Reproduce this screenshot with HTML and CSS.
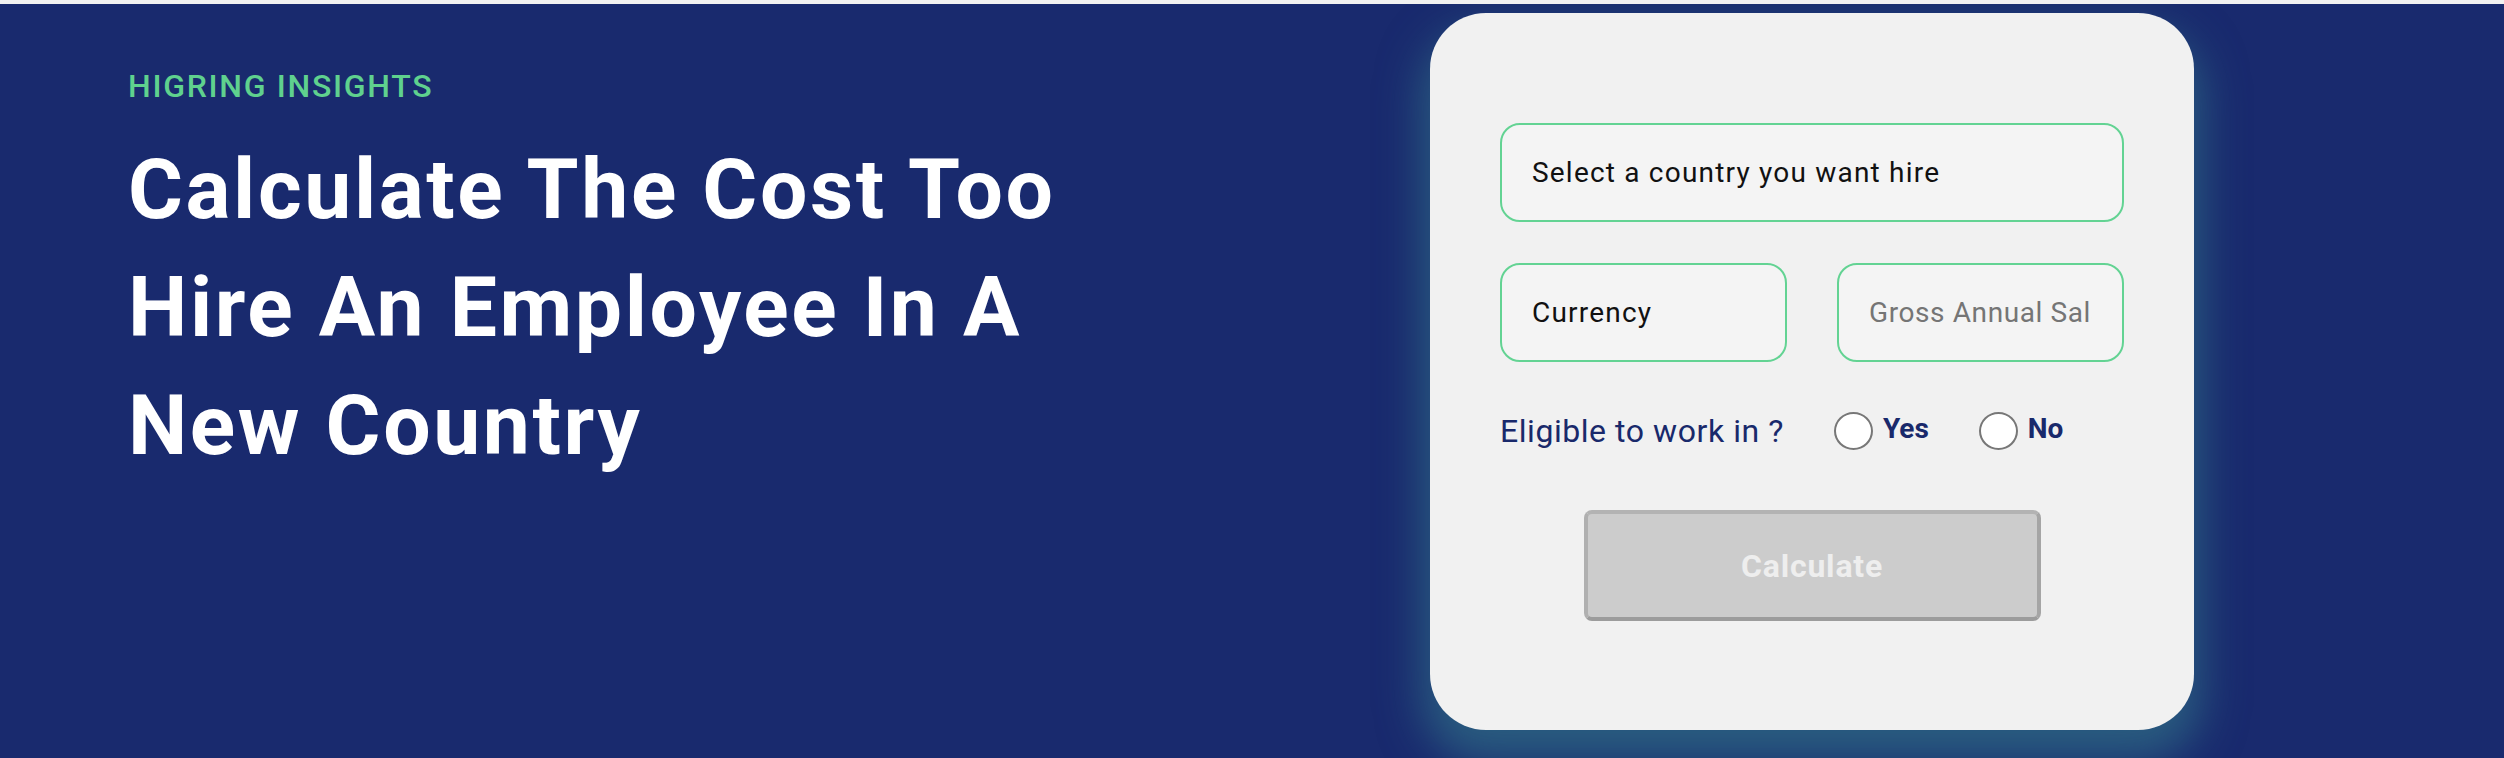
FILE: index.html
```html
<!DOCTYPE html>
<html lang="en">
<head>
<meta charset="utf-8">
<title>Hiring Insights</title>
<link rel="stylesheet" href="styles.css">
</head>
<body>
<section class="hero">
  <div class="intro">
    <p class="eyebrow">HIGRING INSIGHTS</p>
    <h1 class="title">Calculate The Cost Too Hire An Employee In A New Country</h1>
  </div>
  <form class="card">
    <div class="field field-wide">Select a country you want hire</div>
    <div class="field-row">
      <div class="field">Currency</div>
      <input class="field field-input" type="text" placeholder="Gross Annual Salary">
    </div>
    <div class="eligible">
      <span class="eligible-label">Eligible to work in ?</span>
      <label class="choice"><input class="radio" type="radio" name="eligible"><span>Yes</span></label>
      <label class="choice"><input class="radio" type="radio" name="eligible"><span>No</span></label>
    </div>
    <button class="calc" type="button" disabled>Calculate</button>
  </form>
</section>
</body>
</html>
```
FILE: styles.css
```css
html, body {
  margin: 0;
  padding: 0;
  background: #f1f1f1;
  font-family: Roboto, "Noto Sans", sans-serif;
}

.hero {
  margin-top: 4px;
  height: 754px;
  box-sizing: border-box;
  background: #192a6e;
  display: flex;
  align-items: flex-start;
  padding: 9px 0 0 128px;
  overflow: hidden;
}

.intro {
  width: 960px;
  padding-top: 53px;
}

.eyebrow {
  margin: 0;
  font-size: 32px;
  line-height: 40px;
  font-weight: 500;
  letter-spacing: 1.7px;
  color: #5fd18e;
}

.title {
  margin: 25px 0 0;
  font-size: 84px;
  line-height: 118px;
  font-weight: 700;
  letter-spacing: 2.6px;
  color: #ffffff;
}

.card {
  margin: 0 0 0 342px;
  width: 764px;
  height: 717px;
  box-sizing: border-box;
  padding: 110px 70px 0;
  background: #f1f1f1;
  border-radius: 56px;
  box-shadow: 0 24px 44px 8px rgba(52, 122, 138, 0.62);
  display: flex;
  flex-direction: column;
}

.field {
  box-sizing: border-box;
  height: 99px;
  border: 2px solid #63d393;
  border-radius: 20px;
  background: #f4f4f4;
  padding: 0 30px;
  display: flex;
  align-items: center;
  font-family: inherit;
  font-size: 28px;
  letter-spacing: 1.2px;
  color: #111111;
  outline: none;
  min-width: 0;
}

.field-wide {
  width: 100%;
}

.field-row {
  margin-top: 41px;
  display: grid;
  grid-template-columns: 1fr 1fr;
  gap: 50px;
}

.field-input {
  width: 100%;
  letter-spacing: 0.6px;
}

.field-input::placeholder {
  color: #757575;
}

.eligible {
  margin-top: 50px;
  display: flex;
  align-items: center;
  gap: 50px;
  height: 38px;
}

.eligible-label {
  font-size: 32px;
  letter-spacing: 0.55px;
  color: #19296b;
}

.choice {
  display: flex;
  align-items: center;
  gap: 10px;
  font-size: 28px;
  font-weight: 700;
  color: #19296b;
}

.choice span {
  position: relative;
  top: -3px;
}

.radio {
  appearance: none;
  -webkit-appearance: none;
  margin: 0;
  width: 39px;
  height: 38px;
  border: 2px solid #777777;
  border-radius: 50%;
  background: #ffffff;
  box-sizing: border-box;
}

.calc {
  margin: 60px auto 0;
  width: 457px;
  height: 111px;
  box-sizing: border-box;
  background: #cccccc;
  border: 4px solid;
  border-color: #b3b3b3 #a5a5a5 #9c9c9c #b0b0b0;
  border-radius: 8px;
  font-family: inherit;
  font-size: 32px;
  font-weight: 700;
  letter-spacing: 0.8px;
  color: #eeeeee;
}
```
